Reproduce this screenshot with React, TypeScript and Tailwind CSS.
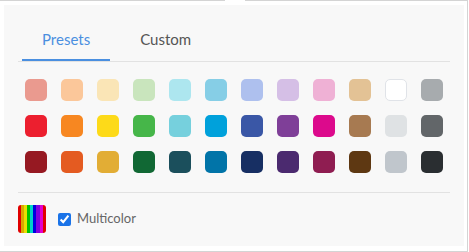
import React from "react";

const rows: string[][] = [
  ["#ea9a8f", "#fbc79a", "#fae5b6", "#c9e5bd", "#ade6ef", "#86cee6", "#aec0ee", "#d5bfe6", "#efb1d5", "#e3c295", "#ffffff", "#a7abae"],
  ["#ec1f2f", "#f78721", "#fdda19", "#46b649", "#76d0dd", "#00a1db", "#3a57a6", "#7f3f98", "#dc0a8c", "#a77a51", "#dfe2e4", "#626669"],
  ["#961922", "#e45b21", "#e2ad35", "#116834", "#1b4f5c", "#0174a8", "#172f63", "#4b2a6f", "#8f1d51", "#5e3812", "#c0c6cc", "#2a2e31"],
];

const rainbow =
  "linear-gradient(to right, #e00000 0 11%, #d8a800 11% 22%, #e8e000 22% 33%, #00c400 33% 44%, #00d4c8 44% 55%, #0000e0 55% 66%, #8000e0 66% 77%, #e000d0 77% 88%, #e00000 88% 100%)";

export default function App() {
  return (
    <div className="w-[469px] h-[252px] bg-white" style={{ fontFamily: "Lato, 'Liberation Sans', sans-serif" }}>
      <div className="relative w-[468px] h-[252px] border-t border-r border-b border-[#d4d4d4] bg-white pl-1 pt-1 pr-[3px] pb-1">
        <div className="absolute -top-px left-[225px] w-5 h-px bg-white" />
        <div className="w-[460px] h-[241px] bg-[#f8f8f8] px-[14px] pt-[14px] flex flex-col">
          <div className="flex pl-1 gap-[10px] border-b border-[#e2e2e2]">
            <div className="px-5 pt-[10px] pb-[10px] border-b-2 border-[#4a8fe0] text-[15px] leading-5 text-[#4a8fe0]">Presets</div>
            <div className="px-5 pt-[10px] pb-3 text-[15px] leading-5 text-[#555]">Custom</div>
          </div>
          <div className="mt-[10px] grid grid-cols-12">
            {rows.flat().map((c, i) => (
              <div key={i} className="h-9 flex items-center justify-center">
                <div
                  className={`w-[22px] h-[22px] rounded-[5px] ${c === "#ffffff" ? "border border-[#e0e3e8]" : ""}`}
                  style={{ backgroundColor: c }}
                />
              </div>
            ))}
          </div>
          <div className="mt-3 border-t border-[#e2e2e2] pt-3 flex items-center">
            <div className="w-7 h-7 rounded-[3px]" style={{ background: rainbow }} />
            <input type="checkbox" defaultChecked className="ml-3 w-[13px] h-[13px] accent-[#1a73e8]" />
            <span className="ml-[6px] text-[13px] text-[#666]">Multicolor</span>
          </div>
        </div>
      </div>
    </div>
  );
}
